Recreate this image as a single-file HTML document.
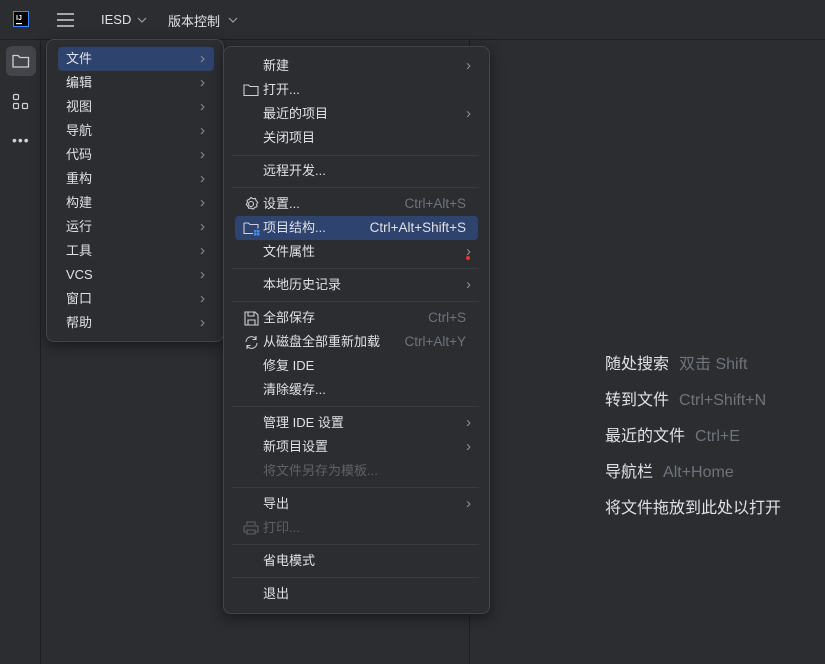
<!DOCTYPE html>
<html><head><meta charset="utf-8">
<style>
*{margin:0;padding:0;box-sizing:border-box}
body{width:825px;height:664px;background:#2b2d30;font-family:"Liberation Sans","Noto Sans CJK SC",sans-serif;color:#dfe1e5;position:relative;overflow:hidden;font-size:13px}
.a{position:absolute;white-space:nowrap}
.top{left:0;top:0;width:825px;height:40px;background:#2b2d30;border-bottom:1px solid #1e1f22}
.strip{left:0;top:40px;width:41px;height:624px;background:#2b2d30;border-right:1px solid #1e1f22}
.panel{left:42px;top:40px;width:428px;height:624px;background:#2b2d30;border-right:1px solid #1e1f22}
.menu{background:#2b2d30;border:1px solid #43454a;border-radius:8px;box-shadow:0 4px 14px rgba(0,0,0,.45)}
.it{position:absolute;height:22px;line-height:22px;font-size:13px;color:#dfe1e5}
.arr{position:absolute;color:#8c8f94;font-size:15px;height:22px;line-height:21px}
.sc{position:absolute;color:#6f737a;height:22px;line-height:22px;font-size:13.5px}
.sep{position:absolute;left:8px;right:10px;height:1px;background:#393b40}
.dis{color:#5f6166}
.hint{position:absolute;left:605px;font-size:16px;color:#dfe1e5}
.hint span{color:#6f737a;margin-left:10px}
</style></head><body>
<div class="a top"></div>
<div class="a strip"></div>
<div class="a panel"></div>
<svg class="a" style="left:13px;top:11px" width="16" height="16"><rect x="0.5" y="0.5" width="15" height="15" fill="#000" stroke="#3d8cff"/><text x="3" y="9" font-size="7" fill="#fff" font-family="Liberation Sans" font-weight="bold">IJ</text><rect x="3" y="12" width="6" height="1.2" fill="#fff"/></svg>
<svg class="a" style="left:57px;top:13px" width="17" height="14"><path d="M0 1h17M0 7h17M0 13h17" stroke="#ced0d6" stroke-width="1.6"/></svg>
<div class="a" style="left:101px;top:12px;font-size:13px">IESD</div>
<svg class="a" style="left:137px;top:17px" width="10" height="6"><path d="M1 1l4 4 4-4" fill="none" stroke="#9a9da3" stroke-width="1.2"/></svg>
<div class="a" style="left:168px;top:11px;font-size:13px">版本控制</div>
<svg class="a" style="left:228px;top:17px" width="10" height="6"><path d="M1 1l4 4 4-4" fill="none" stroke="#9a9da3" stroke-width="1.2"/></svg>
<div class="a" style="left:6px;top:46px;width:30px;height:30px;background:#43454a;border-radius:6px"></div>
<svg class="a" style="left:12px;top:53px" width="18" height="16"><path d="M1 2.5h5l2 2h8.5v9.5h-15.5z" fill="none" stroke="#ced0d6" stroke-width="1.3"/></svg>
<svg class="a" style="left:12px;top:93px" width="18" height="18"><rect x="1.5" y="1.5" width="5" height="5" rx="1" fill="none" stroke="#ced0d6" stroke-width="1.2"/><rect x="1.5" y="10.5" width="5" height="5" rx="1" fill="none" stroke="#ced0d6" stroke-width="1.2"/><rect x="10.5" y="10.5" width="5" height="5" rx="1" fill="none" stroke="#ced0d6" stroke-width="1.2"/></svg>
<div class="a" style="left:12px;top:132px;color:#ced0d6;font-size:14px;letter-spacing:1px">•••</div>

<div class="a menu" style="left:46px;top:39px;width:178px;height:303px"></div>
<div class="a" style="left:58px;top:47px;width:156px;height:24px;background:#2e436e;border-radius:4px"></div>
<div class="it" style="left:66px;top:48px">文件</div><div class="arr" style="left:200px;top:48px">›</div>
<div class="it" style="left:66px;top:72px">编辑</div><div class="arr" style="left:200px;top:72px">›</div>
<div class="it" style="left:66px;top:96px">视图</div><div class="arr" style="left:200px;top:96px">›</div>
<div class="it" style="left:66px;top:120px">导航</div><div class="arr" style="left:200px;top:120px">›</div>
<div class="it" style="left:66px;top:144px">代码</div><div class="arr" style="left:200px;top:144px">›</div>
<div class="it" style="left:66px;top:168px">重构</div><div class="arr" style="left:200px;top:168px">›</div>
<div class="it" style="left:66px;top:192px">构建</div><div class="arr" style="left:200px;top:192px">›</div>
<div class="it" style="left:66px;top:216px">运行</div><div class="arr" style="left:200px;top:216px">›</div>
<div class="it" style="left:66px;top:240px">工具</div><div class="arr" style="left:200px;top:240px">›</div>
<div class="it" style="left:66px;top:264px">VCS</div><div class="arr" style="left:200px;top:264px">›</div>
<div class="it" style="left:66px;top:288px">窗口</div><div class="arr" style="left:200px;top:288px">›</div>
<div class="it" style="left:66px;top:312px">帮助</div><div class="arr" style="left:200px;top:312px">›</div>

<div class="a menu" style="left:223px;top:46px;width:267px;height:568px">
<div class="sep" style="top:108px"></div>
<div class="sep" style="top:140px"></div>
<div class="sep" style="top:221px"></div>
<div class="sep" style="top:254px"></div>
<div class="sep" style="top:359px"></div>
<div class="sep" style="top:440px"></div>
<div class="sep" style="top:497px"></div>
<div class="sep" style="top:530px"></div>
</div>
<div class="a" style="left:235px;top:216px;width:243px;height:24px;background:#2e436e;border-radius:4px"></div>
<svg class="a" style="left:243px;top:83px" width="16" height="14"><path d="M1 2h4.5l1.5 1.5h8v9h-14z" fill="none" stroke="#ced0d6" stroke-width="1.1"/></svg>
<svg class="a" style="left:243px;top:196px" width="16" height="16"><circle cx="8" cy="8" r="2.5" fill="none" stroke="#ced0d6" stroke-width="1.1"/><path d="M8 1.5l2 1.2 2.3-.2.8 2.1 1.6 1.7-1 2 .2 2.3-2.1.9-1.7 1.6-2-1-2.3.2-.9-2.1-1.6-1.6 1-2-.2-2.3 2.1-.9z" fill="none" stroke="#ced0d6" stroke-width="1.1"/></svg>
<svg class="a" style="left:243px;top:221px" width="17" height="15"><path d="M1 2h4.5l1.5 1.5h8v4M10 12.5h-9v-10.5" fill="none" stroke="#ced0d6" stroke-width="1.1"/><rect x="11" y="9" width="2.5" height="2.5" fill="#3d8cff"/><rect x="14" y="9" width="2.5" height="2.5" fill="#3d8cff"/><rect x="11" y="12" width="2.5" height="2.5" fill="#3d8cff"/><rect x="14" y="12" width="2.5" height="2.5" fill="#3d8cff"/></svg>
<svg class="a" style="left:244px;top:311px" width="15" height="15"><path d="M1 1h10l3 3v10h-13z M4 1v4h6v-4 M4 14v-5h7v5" fill="none" stroke="#ced0d6" stroke-width="1.1"/></svg>
<svg class="a" style="left:243px;top:335px" width="17" height="15"><path d="M3 7a5.5 5.5 0 0 1 10-3M14 8a5.5 5.5 0 0 1-10 3M13 1v3.5h-3.5M4 14v-3.5h3.5" fill="none" stroke="#ced0d6" stroke-width="1.1"/></svg>
<svg class="a" style="left:243px;top:521px" width="16" height="14"><path d="M4 4v-3h8v3M1 5h14v6h-3M4 11h-3v-6M4 9h8v4h-8z" fill="none" stroke="#5f6166" stroke-width="1.1"/></svg>

<div class="it" style="left:263px;top:55px">新建</div><div class="arr" style="left:466px;top:55px">›</div>
<div class="it" style="left:263px;top:79px">打开...</div>
<div class="it" style="left:263px;top:103px">最近的项目</div><div class="arr" style="left:466px;top:103px">›</div>
<div class="it" style="left:263px;top:127px">关闭项目</div>
<div class="it" style="left:263px;top:160px">远程开发...</div>
<div class="it" style="left:263px;top:193px">设置...</div><div class="sc" style="left:0;width:466px;text-align:right;top:193px">Ctrl+Alt+S</div>
<div class="it" style="left:263px;top:217px">项目结构...</div><div class="sc" style="left:0;width:466px;text-align:right;top:217px;color:#dfe1e5">Ctrl+Alt+Shift+S</div>
<div class="it" style="left:263px;top:241px">文件属性</div><div class="arr" style="left:466px;top:241px">›</div>
<div class="a" style="left:466px;top:256px;width:4px;height:4px;border-radius:2px;background:#e5363a"></div>
<div class="it" style="left:263px;top:274px">本地历史记录</div><div class="arr" style="left:466px;top:274px">›</div>
<div class="it" style="left:263px;top:307px">全部保存</div><div class="sc" style="left:0;width:466px;text-align:right;top:307px">Ctrl+S</div>
<div class="it" style="left:263px;top:331px">从磁盘全部重新加载</div><div class="sc" style="left:0;width:466px;text-align:right;top:331px">Ctrl+Alt+Y</div>
<div class="it" style="left:263px;top:355px">修复 IDE</div>
<div class="it" style="left:263px;top:379px">清除缓存...</div>
<div class="it" style="left:263px;top:412px">管理 IDE 设置</div><div class="arr" style="left:466px;top:412px">›</div>
<div class="it" style="left:263px;top:436px">新项目设置</div><div class="arr" style="left:466px;top:436px">›</div>
<div class="it dis" style="left:263px;top:460px">将文件另存为模板...</div>
<div class="it" style="left:263px;top:493px">导出</div><div class="arr" style="left:466px;top:493px">›</div>
<div class="it dis" style="left:263px;top:517px">打印...</div>
<div class="it" style="left:263px;top:550px">省电模式</div>
<div class="it" style="left:263px;top:583px">退出</div>

<div class="hint" style="top:350px">随处搜索<span>双击 Shift</span></div>
<div class="hint" style="top:386px">转到文件<span>Ctrl+Shift+N</span></div>
<div class="hint" style="top:422px">最近的文件<span>Ctrl+E</span></div>
<div class="hint" style="top:458px">导航栏<span>Alt+Home</span></div>
<div class="hint" style="top:494px">将文件拖放到此处以打开</div>
</body></html>
